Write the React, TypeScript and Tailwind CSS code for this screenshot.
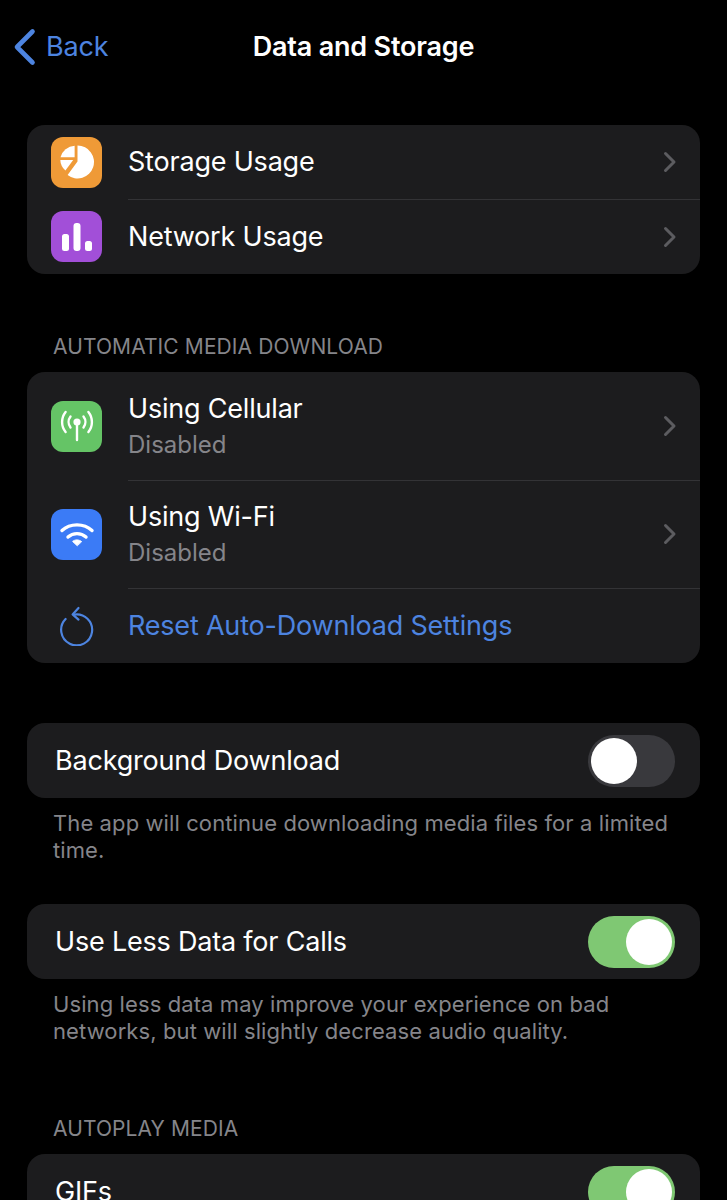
import React from "react";

const font = { fontFamily: "Inter, 'Liberation Sans', sans-serif" };

function Chevron() {
  return (
    <svg width="14" height="22" viewBox="0 0 14 22" fill="none" className="shrink-0">
      <path d="M2.5 2.5 L11 11 L2.5 19.5" stroke="#5c5c60" strokeWidth="3" strokeLinecap="round" strokeLinejoin="round" />
    </svg>
  );
}

function Tile({ color, children }: { color: string; children: React.ReactNode }) {
  return (
    <div className={`w-[51px] h-[51px] rounded-[12px] flex items-center justify-center shrink-0 ${color}`}>
      {children}
    </div>
  );
}

function PieIcon() {
  return (
    <svg width="36" height="36" viewBox="0 0 36 36" fill="white">
      <path d="M18.5 1.6 A16.4 16.4 0 1 1 8.6 31 L18.5 17.5 Z" />
      <path d="M15.6 1.8 V13.2 H1.5 A15 15 0 0 1 15.6 1.8 Z" />
      <path d="M1.3 16 H14.2 L6.4 26.6 A15 15 0 0 1 1.3 16 Z" />
    </svg>
  );
}

function BarsIcon() {
  return (
    <svg width="34" height="30" viewBox="0 0 34 30" fill="white">
      <rect x="2" y="12" width="7" height="17" rx="2.5" />
      <rect x="13.5" y="1" width="7" height="28" rx="3" />
      <rect x="25" y="19" width="7" height="10" rx="2.5" />
    </svg>
  );
}

function AntennaIcon() {
  return (
    <svg width="38" height="38" viewBox="0 0 38 38" fill="none" stroke="white" strokeLinecap="round">
      <circle cx="19" cy="15" r="3.6" fill="white" stroke="none" />
      <path d="M19 16 V33" strokeWidth="2.4" />
      <path d="M12.5 9.5 A9 9 0 0 0 12.5 20.5" strokeWidth="2.4" />
      <path d="M25.5 9.5 A9 9 0 0 1 25.5 20.5" strokeWidth="2.4" />
      <path d="M7.6 5 A16 16 0 0 0 7.6 25" strokeWidth="2.4" />
      <path d="M30.4 5 A16 16 0 0 1 30.4 25" strokeWidth="2.4" />
    </svg>
  );
}

function WifiIcon() {
  return (
    <svg width="36" height="28" viewBox="0 0 36 28" fill="none" stroke="white" strokeLinecap="round">
      <path d="M3 9.5 C11 2 25 2 33 9.5" strokeWidth="3.4" />
      <path d="M9 16 C14 11.5 22 11.5 27 16" strokeWidth="3.4" />
      <path d="M18 24.5 L13.6 20.4 C16 18.4 20 18.4 22.4 20.4 Z" fill="white" stroke="white" strokeWidth="1" strokeLinejoin="round" />
    </svg>
  );
}

function ResetIcon() {
  return (
    <svg width="36" height="40" viewBox="0 0 36 40" fill="none" stroke="#4d84e0" strokeWidth="2.2" strokeLinecap="round" strokeLinejoin="round">
      <path d="M15 8.6 A15.5 15.5 0 1 1 6.6 13" />
      <path d="M19.5 2 L13.6 8.4 L19.5 13.6" />
    </svg>
  );
}

function Toggle({ on }: { on: boolean }) {
  return (
    <div
      className={`w-[87px] h-[52px] rounded-full p-[3px] flex shrink-0 ${
        on ? "bg-[#7fc873] justify-end" : "bg-[#39393d] justify-start"
      }`}
    >
      <div className="w-[46px] h-[46px] rounded-full bg-white" />
    </div>
  );
}

function IconRow({ icon, title, sub, last }: { icon: React.ReactNode; title: string; sub?: string; last?: boolean }) {
  return (
    <div className={`flex items-center pl-6 ${sub ? "h-[108.5px]" : "h-[74.5px]"}`}>
      <div className="mr-[26px] w-[51px] flex justify-center shrink-0">{icon}</div>
      <div className={`flex-1 h-full flex items-center pr-[23px] ${last ? "" : "border-b border-[#333336]"}`}>
        <div className="flex-1">
          <div className="text-[27px] leading-[34px] text-white tracking-[-0.2px]">{title}</div>
          {sub && <div className="text-[24px] leading-[30px] mt-[4px] text-[#85858a]">{sub}</div>}
        </div>
        <Chevron />
      </div>
    </div>
  );
}

function ToggleCard({ label, on }: { label: string; on: boolean }) {
  return (
    <div className="mx-[27px] h-[75px] rounded-[18px] bg-[#1c1c1e] flex items-center pl-7 pr-[25px]">
      <span className="flex-1 text-[27px] leading-[34px] text-white tracking-[-0.2px]">{label}</span>
      <Toggle on={on} />
    </div>
  );
}

function SectionHeader({ children }: { children: React.ReactNode }) {
  return (
    <div className="mx-[53px] text-[21px] leading-[26px] text-[#85858a] tracking-[0.1px] whitespace-nowrap">{children}</div>
  );
}

function Note({ children }: { children: React.ReactNode }) {
  return <p className="mx-[53px] mt-[12px] text-[22px] leading-[27px] text-[#85858a] tracking-[0.1px]">{children}</p>;
}

export default function App() {
  return (
    <div className="w-[727px] h-[1200px] overflow-hidden bg-black" style={font}>
      <header className="h-[94px] flex items-center relative">
        <div className="flex items-center pl-[13px]">
          <svg width="24" height="38" viewBox="0 0 24 38" fill="none">
            <path d="M19.5 3.5 L4 19 L19.5 34.5" stroke="#4d84e0" strokeWidth="4.6" strokeLinecap="round" strokeLinejoin="round" />
          </svg>
          <span className="ml-[9px] text-[27px] text-[#4d84e0] tracking-[-0.2px]">Back</span>
        </div>
        <h1 className="absolute inset-x-0 text-center text-[27px] font-semibold text-white tracking-[-0.2px]">
          Data and Storage
        </h1>
      </header>

      <section className="mt-[31px] mx-[27px] rounded-[18px] bg-[#1c1c1e] overflow-hidden">
        <IconRow icon={<Tile color="bg-[#ef9a37]"><PieIcon /></Tile>} title="Storage Usage" />
        <IconRow icon={<Tile color="bg-[#a24fd8]"><BarsIcon /></Tile>} title="Network Usage" last />
      </section>

      <div className="mt-[60px]">
        <SectionHeader>AUTOMATIC MEDIA DOWNLOAD</SectionHeader>
      </div>
      <section className="mt-[12px] mx-[27px] rounded-[18px] bg-[#1c1c1e] overflow-hidden">
        <IconRow icon={<Tile color="bg-[#65c466]"><AntennaIcon /></Tile>} title="Using Cellular" sub="Disabled" />
        <IconRow icon={<Tile color="bg-[#3b7bf6]"><WifiIcon /></Tile>} title="Using Wi-Fi" sub="Disabled" />
        <div className="h-[74px] flex items-center pl-6">
          <div className="mr-[26px] w-[51px] flex justify-center shrink-0"><ResetIcon /></div>
          <span className="text-[27px] text-[#4d84e0] tracking-[-0.2px]">Reset Auto-Download Settings</span>
        </div>
      </section>

      <div className="mt-[60px]">
        <ToggleCard label="Background Download" on={false} />
        <Note>The app will continue downloading media files for a limited time.</Note>
      </div>

      <div className="mt-[40px]">
        <ToggleCard label="Use Less Data for Calls" on />
        <Note>Using less data may improve your experience on bad networks, but will slightly decrease audio quality.</Note>
      </div>

      <div className="mt-[71px]">
        <SectionHeader>AUTOPLAY MEDIA</SectionHeader>
      </div>
      <div className="mt-[12px]">
        <ToggleCard label="GIFs" on />
      </div>
    </div>
  );
}
